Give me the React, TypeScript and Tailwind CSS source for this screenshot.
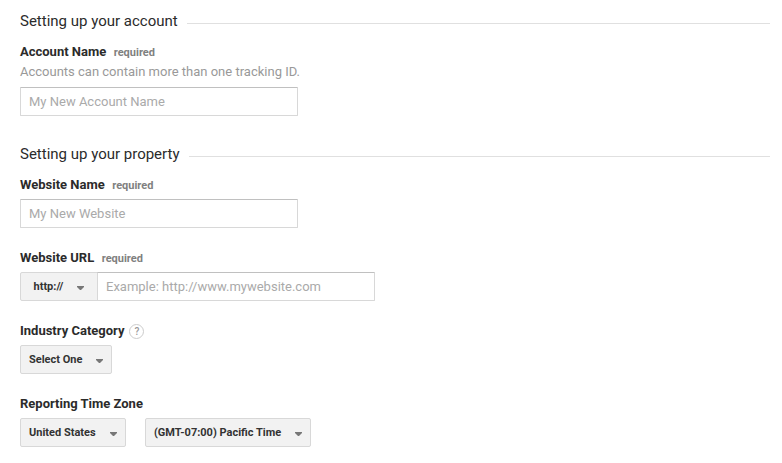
import React from "react";

interface SectionTitleProps {
    title: string
}

interface LabelProps {
    text: string
    required?: boolean
}

interface SelectProps {
    value: string
    className: string
}

function SectionTitle({ title }: SectionTitleProps) {
    return (
        <div className="flex h-5 items-center">
            <h2 className="text-[15px] leading-5 text-[#2b2b2b] whitespace-nowrap">{title}</h2>
            <div className="ml-[9.8px] mt-1 h-px flex-1 bg-[#e0e0e0]" />
        </div>
    );
}

function Label({ text, required }: LabelProps) {
    return (
        <div className="flex h-5 items-center whitespace-nowrap">
            <span className="text-[13px] font-bold text-[#2b2b2b]">{text}</span>
            {required && <span className="ml-[7.5px] mt-0.5 text-[11px] font-bold text-[#808080]">required</span>}
        </div>
    );
}

function Arrow() {
    return (
        <svg width="8" height="4" viewBox="0 0 8 4" className="mt-[3px] shrink-0 fill-[#777]">
            <path d="M0 0h7v1L4 4H3L0 1z" />
        </svg>
    );
}

function Select({ value, className }: SelectProps) {
    return (
        <button className={"flex h-[29px] items-center justify-between border border-[#d8d8d8] bg-[#f2f2f2] text-[11px] font-bold whitespace-nowrap text-[#333] " + className}>
            <span className="mt-px">{value}</span>
            <Arrow />
        </button>
    );
}

export default function App() {
    const input = "block h-[29px] border border-[#d8d8d8] border-t-[#c0c0c0] bg-white px-2 text-[13px] text-[#222] outline-none placeholder:text-[#aaa]";

    return (
        <main className="h-[463px] w-[782px] overflow-hidden bg-white pt-[11px] pr-3 pl-5 font-[Roboto,sans-serif]">
            <SectionTitle title="Setting up your account" />
            <div className="mt-[11px]">
                <Label text="Account Name" required />
                <p className="text-[13px] leading-5 text-[#999]">Accounts can contain more than one tracking ID.</p>
                <input className={input + " mt-[5px] w-[278px] rounded-[1px]"} placeholder="My New Account Name" />
            </div>

            <div className="mt-7">
                <SectionTitle title="Setting up your property" />
            </div>
            <div className="mt-[11px]">
                <Label text="Website Name" required />
                <input className={input + " mt-1 w-[278px] rounded-[1px]"} placeholder="My New Website" />
            </div>

            <div className="mt-5">
                <Label text="Website URL" required />
                <div className="mt-1 flex">
                    <Select value="http://" className="w-[78px] rounded-l-[2px] pr-3 pl-[12.5px]" />
                    <input className={input + " -ml-px w-[278px] rounded-r-[1px]"} placeholder="Example: http://www.mywebsite.com" />
                </div>
            </div>

            <div className="mt-5">
                <div className="flex items-center">
                    <Label text="Industry Category" />
                    <span className="ml-[5px] flex size-[15px] items-center justify-center rounded-full border border-[#ccc] text-[10px] font-medium text-[#999]">?</span>
                </div>
                <Select value="Select One" className="mt-1 w-[92px] rounded-[2px] pr-[7px] pl-2" />
            </div>

            <div className="mt-5">
                <Label text="Reporting Time Zone" />
                <div className="mt-1 flex gap-[19px]">
                    <Select value="United States" className="w-[106px] rounded-[2px] pr-[7px] pl-2" />
                    <Select value="(GMT-07:00) Pacific Time" className="w-[166px] rounded-[2px] pr-[7px] pl-2" />
                </div>
            </div>
        </main>
    );
}
